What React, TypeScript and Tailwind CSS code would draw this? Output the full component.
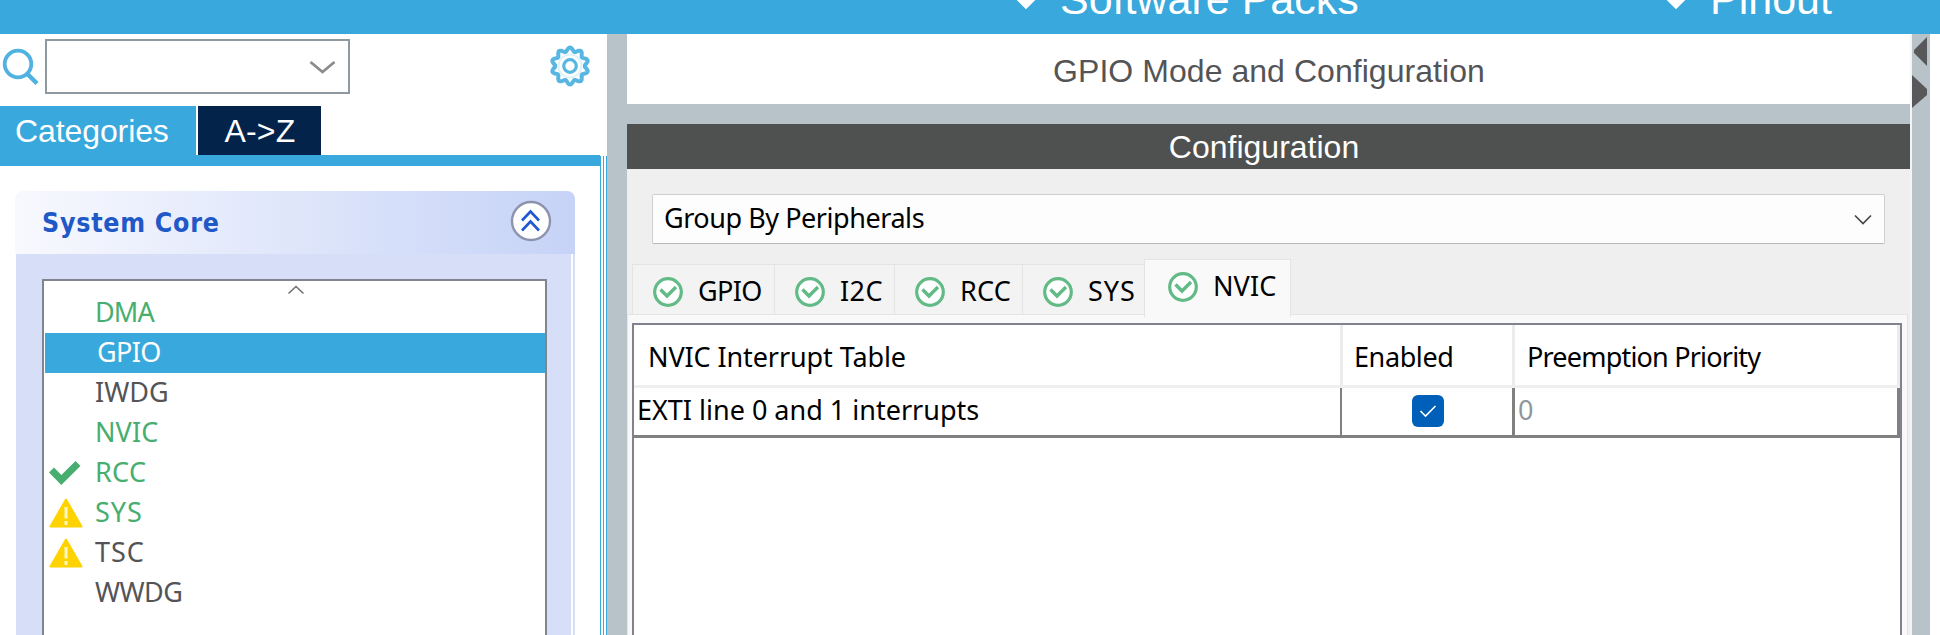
type Status = 'none' | 'ok' | 'warn';

const ITEMS: { name: string; cls: string; status: Status }[] = [
  { name: 'DMA', cls: 'text-[#47ae6f] tracking-[-0.9px]', status: 'none' },
  { name: 'GPIO', cls: 'text-white bg-[#39a8dc] pl-[2px] tracking-[-0.6px]', status: 'none' },
  { name: 'IWDG', cls: 'text-[#545456] tracking-[0px]', status: 'none' },
  { name: 'NVIC', cls: 'text-[#47ae6f] tracking-[0.1px]', status: 'none' },
  { name: 'RCC', cls: 'text-[#47ae6f] tracking-[0.3px]', status: 'ok' },
  { name: 'SYS', cls: 'text-[#47ae6f] tracking-[0.9px]', status: 'warn' },
  { name: 'TSC', cls: 'text-[#545456] tracking-[0.9px]', status: 'warn' },
  { name: 'WWDG', cls: 'text-[#545456] tracking-[-0.6px]', status: 'none' },
];

const TABS = [
  { name: 'GPIO', cls: 'w-[142px] pl-[20px] tracking-[-0.6px]' },
  { name: 'I2C', cls: 'w-[120px] pl-[20px] tracking-[0.4px]' },
  { name: 'RCC', cls: 'w-[128px] pl-[20px] tracking-[0.2px]' },
  { name: 'SYS', cls: 'w-[122px] pl-[20px] tracking-[1px]' },
];

const gearPath =
  Array.from({ length: 120 }, (_, i) => {
    const a = (i / 120) * Math.PI * 2;
    const r = 16.6 + 1.9 * Math.cos(10 * a);
    return `${i ? 'L' : 'M'}${(21 + r * Math.sin(a)).toFixed(2)} ${(21 - r * Math.cos(a)).toFixed(2)}`;
  }).join('') + 'Z';

function StatusIcon({ status }: { status: Status }) {
  if (status === 'ok')
    return (
      <svg className="block" width="34" height="40" fill="none" stroke="#47ae6f" strokeWidth="7">
        <path d="M2.5 17L12.3 27L29 10.5" />
      </svg>
    );
  if (status === 'warn')
    return (
      <svg className="block" width="34" height="40">
        <path d="M17 6.5L32.5 33.5H1.5Z" fill="#ffd300" stroke="#ffd300" strokeWidth="2" strokeLinejoin="round" />
        <path d="M17 14V25.5M17 28V32" stroke="#fff6c4" strokeWidth="3" />
      </svg>
    );
  return null;
}

function CircleCheck() {
  return (
    <svg className="mr-[14px] shrink-0" width="31" height="30" fill="none" stroke="#62bb86">
      <circle cx="15" cy="15" r="13.3" strokeWidth="3.2" fill="#fff" />
      <path d="M7.5 12.5L14 19L23 10" strokeWidth="3.4" />
    </svg>
  );
}

function MenuCheck() {
  return (
    <svg className="mt-[4px] shrink-0" width="36" height="40" fill="none" stroke="#fff" strokeWidth="7.5">
      <path d="M3 12L14 23L32 5" />
    </svg>
  );
}

export default function App() {
  return (
    <div className="flex h-[635px] w-[1940px] flex-col overflow-hidden bg-white font-['Noto_Sans',sans-serif] text-[27px] whitespace-nowrap text-black">
      <header className="h-[34px] shrink-0 overflow-hidden bg-[#39a8dc]">
        <div className="-mt-[36px] flex h-[70px] items-center pl-[1012px] font-['Liberation_Sans',sans-serif] text-[43px] text-white">
          <div className="flex w-[650px] items-center gap-[12px]">
            <MenuCheck />
            <span>Software Packs</span>
          </div>
          <div className="flex items-center gap-[12px]">
            <MenuCheck />
            <span>Pinout</span>
          </div>
        </div>
      </header>

      <div className="flex min-h-0 flex-1">
        <aside className="flex w-[607px] shrink-0 flex-col">
          <div className="flex h-[72px] shrink-0 items-start pt-[5px]">
            <svg className="mt-[8px] shrink-0" width="45" height="42" fill="none" stroke="#4fb2e0">
              <circle cx="18" cy="17" r="13.3" strokeWidth="3.8" />
              <path d="M27 26.5L37 36.5" strokeWidth="4.5" />
            </svg>
            <div className="flex h-[55px] w-[305px] items-center justify-end border-2 border-[#9098a0] pr-[12px]">
              <svg width="27" height="14" fill="none" stroke="#8c8c8c" strokeWidth="2.8">
                <path d="M1.5 2L13.5 12L25.5 2" />
              </svg>
            </div>
            <svg className="mt-[6px] ml-[199px]" width="42" height="42" fill="none" stroke="#58b6e2">
              <path d={gearPath} strokeWidth="4" />
              <circle cx="21" cy="21" r="11.5" strokeWidth="2" stroke="#dff2fa" />
              <circle cx="21" cy="21" r="6.3" strokeWidth="3.2" />
            </svg>
          </div>
          <div className="flex h-[49px] shrink-0 gap-[2px] font-['Liberation_Sans',sans-serif] text-[32px] text-white">
            <div className="flex w-[196px] items-center bg-[#39a8dc] pl-[15px] tracking-[-0.1px]">Categories</div>
            <div className="flex w-[123px] items-center justify-center bg-[#03234b] pl-px tracking-[0.2px]">A-&gt;Z</div>
          </div>
          <div className="flex min-h-0 flex-1">
            <div className="flex w-[600px] flex-col border-t-[11px] border-[#39a8dc] pt-[25px] pl-[15px]">
              <div className="flex h-[63px] w-[560px] shrink-0 items-center justify-between rounded-t-[8px] bg-linear-to-r from-[#f8f9fe] to-[#c6d3f7] pr-[23px] pl-[27px]">
                <span className="font-['DejaVu_Sans_Condensed','DejaVu_Sans',sans-serif] text-[26.5px] font-bold tracking-[0.75px] text-[#2158c7]">System Core</span>
                <svg className="-mt-[4px]" width="42" height="42" fill="none">
                  <circle cx="21" cy="21" r="19" fill="#fff" stroke="#8d93ad" strokeWidth="2.4" />
                  <path d="M12 20.5L20.5 11.5L29 20.5M12 30.5L20.5 21.5L29 30.5" stroke="#2158d0" strokeWidth="2.6" />
                </svg>
              </div>
              <div className="ml-px flex w-[559px] flex-1 border-r-2 border-[#d7def8]">
                <div className="mr-[2px] flex flex-1 bg-[#d7def8] pt-[25px] pl-[26px]">
                  <div className="w-[505px] border-2 border-b-0 border-[#80858f] bg-white">
                    <svg className="mx-auto block overflow-visible" width="16" height="12" fill="none" stroke="#707070" strokeWidth="1.6">
                      <path d="M1.5 12.5L9 5.5L16.5 12.5" />
                    </svg>
                    {ITEMS.map((it) => (
                      <div key={it.name} className="pl-px">
                        <div className={`flex h-[40px] items-center ${it.cls}`}>
                          <div className="ml-[4px] h-[40px] w-[46px] shrink-0">
                            <StatusIcon status={it.status} />
                          </div>
                          <span className="-mt-px">{it.name}</span>
                        </div>
                      </div>
                    ))}
                  </div>
                </div>
              </div>
            </div>
            <div className="mt-px flex flex-1 justify-between border-x border-[#39a8dc]">
              <div className="ml-[2px] w-px bg-[#39a8dc]" />
            </div>
          </div>
        </aside>

        <div className="w-[20px] shrink-0 bg-[#b8c3c9]" />

        <main className="flex w-[1285px] shrink-0 flex-col border-r-2 border-[#f4f4f4] bg-[#efefef]">
          <div className="flex h-[70px] shrink-0 items-center justify-center bg-white pt-[3px] pl-px font-['Liberation_Sans',sans-serif] text-[32px] tracking-[0.05px] text-[#545456]">
            GPIO Mode and Configuration
          </div>
          <div className="h-[20px] shrink-0 bg-[#b8c3c9]" />
          <div className="flex h-[45px] shrink-0 items-center justify-center bg-[#4f5150] pt-px pr-[9px] font-['Liberation_Sans',sans-serif] text-[32px] text-white">
            Configuration
          </div>
          <div className="mt-[25px] ml-[25px] flex h-[50px] w-[1233px] shrink-0 items-center justify-between rounded-[2px] border border-[#cfcfcf] border-b-[#b9b9b9] bg-[#fdfdfd] pr-[12px] pl-[11px]">
            <span className="-mt-px tracking-[-0.45px]">Group By Peripherals</span>
            <svg width="18" height="11" fill="none" stroke="#444444" strokeWidth="1.6">
              <path d="M1 1.5L9 9.5L17 1.5" />
            </svg>
          </div>
          <div className="mt-[15px] flex h-[55px] shrink-0 items-end pl-[5px]">
            {TABS.map((t) => (
              <div key={t.name} className={`flex h-[50px] shrink-0 items-center overflow-hidden border-t border-l border-[#e4e4e4] bg-[#f3f3f3] pt-[4px] ${t.cls}`}>
                <CircleCheck />
                <span className="-mt-px">{t.name}</span>
              </div>
            ))}
            <div className="z-10 -mb-[3px] flex h-[58px] w-[147px] shrink-0 items-center border border-b-0 border-[#e4e4e4] bg-[#f9f9f9] pb-[4px] pl-[23px] tracking-[0.1px]">
              <CircleCheck />
              <span>NVIC</span>
            </div>
          </div>
          <div className="mr-[2px] flex flex-1 border border-b-0 border-[#e4e4e4] bg-[#f9f9f9] pt-[8px] pl-[4px]">
            <div className="w-[1270px] border-2 border-b-0 border-[#80838e] bg-white">
              <div className="flex h-[63px] items-center border-b-[3px] border-[#efefef]">
                <div className="flex h-full w-[709px] items-center border-r-[3px] border-[#ececec] pt-[4px] pl-[14px] tracking-[-0.1px]">NVIC Interrupt Table</div>
                <div className="flex h-full w-[172px] items-center border-r-[3px] border-[#ececec] pt-[4px] pl-[11px] tracking-[-0.4px]">Enabled</div>
                <div className="flex h-full flex-1 items-center border-r-[3px] border-[#ececec] pt-[4px] pl-[12px] tracking-[-0.8px]">Preemption Priority</div>
              </div>
              <div className="flex h-[50px] items-center border-b-[3px] border-[#808080]">
                <div className="flex h-full w-[708px] items-center border-r-2 border-[#808080] pb-[2px] pl-[3px]">EXTI line 0 and 1 interrupts</div>
                <div className="flex h-full w-[173px] items-center justify-center border-r-[3px] border-[#808080] pb-px pl-[2px]">
                  <div className="flex h-[32px] w-[32px] items-center justify-center rounded-[6px] bg-[#005fb8]">
                    <svg width="18" height="14" fill="none" stroke="#ffffff" strokeWidth="1.6">
                      <path d="M1.5 7L6.5 12L16.5 2" />
                    </svg>
                  </div>
                </div>
                <div className="flex h-full flex-1 items-center border-r-[3px] border-[#808080] pb-[2px] pl-[3px] text-[#8f979e]">0</div>
              </div>
            </div>
          </div>
        </main>

        <div className="w-[18px] shrink-0 bg-[#b8c3c9]">
          <svg className="block" width="18" height="80" fill="#58585a">
            <path d="M15 3V32L2 19V16Z" />
            <path d="M0 41L15 55V61L0 74Z" />
          </svg>
        </div>
      </div>
    </div>
  );
}
